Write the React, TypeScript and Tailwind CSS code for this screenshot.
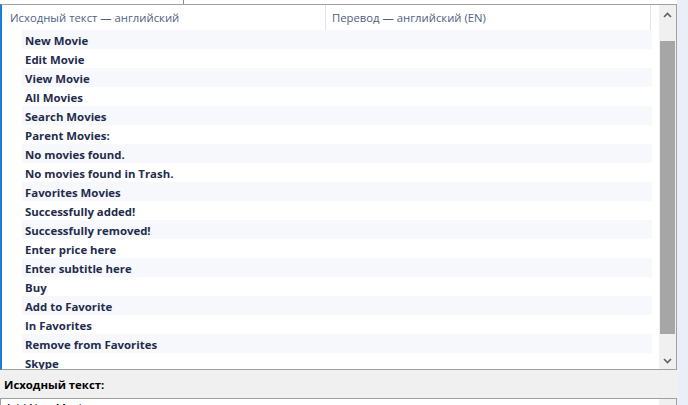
const ROWS = [
  "New Movie",
  "Edit Movie",
  "View Movie",
  "All Movies",
  "Search Movies",
  "Parent Movies:",
  "No movies found.",
  "No movies found in Trash.",
  "Favorites Movies",
  "Successfully added!",
  "Successfully removed!",
  "Enter price here",
  "Enter subtitle here",
  "Buy",
  "Add to Favorite",
  "In Favorites",
  "Remove from Favorites",
  "Skype",
];

function Chevron({ up }: { up?: boolean }) {
  return (
    <svg width="9" height="6" viewBox="0 0 9 6" className="text-[#606060]">
      <path
        d={up ? "M1 5 L4.5 1.5 L8 5" : "M1 1 L4.5 4.5 L8 1"}
        fill="none"
        stroke="currentColor"
        strokeWidth="1.6"
      />
    </svg>
  );
}

export default function App() {
  return (
    <div
      className="flex w-[688px] h-[405px] overflow-hidden bg-[#f0f0f0]"
      style={{ fontFamily: '"Open Sans", "Noto Sans", sans-serif' }}
    >
      <div className="flex flex-col w-[677px]">
        {/* strip from the panel above */}
        <div className="h-[4px] shrink-0 bg-white flex pl-[183px]">
          <div className="w-px h-full bg-[#8a8a8a]" />
        </div>

        {/* string list */}
        <div className="h-[366px] shrink-0 flex border-t border-r border-b border-t-[#a0a0a0] border-r-[#a0a0a0] border-b-[#a0a0a0] border-l-2 border-l-[#1a7fd9] bg-white">
          <div className="flex-1 flex flex-col overflow-hidden">
            <div className="h-[25px] flex shrink-0 text-[11.3px] text-[#51617f]">
              <div className="w-[324px] flex items-center pl-[8px] pt-[1px] border-r border-[#e3e3e3]">
                Исходный текст — английский
              </div>
              <div className="w-[325px] flex items-center pl-[6px] pt-[1px] border-r border-[#e3e3e3]">
                Перевод — английский (EN)
              </div>
            </div>
            <div className="flex flex-col">
              {ROWS.map((r, i) => (
                <div key={r} className="h-[19px] shrink-0 flex pl-[20px] pr-[7px]">
                  <div
                    className={`flex-1 flex items-center pl-[3px] pt-[2px] text-[11.4px] font-bold text-[#1f2c4c] ${
                      i % 2 === 0 ? "bg-[#f7f8fc]" : "bg-white"
                    }`}
                  >
                    {r}
                  </div>
                </div>
              ))}
            </div>
          </div>

          {/* scrollbar */}
          <div className="w-[17px] flex flex-col bg-[#f0f0f0]">
            <div className="h-[19px] flex items-center justify-center">
              <Chevron up />
            </div>
            <div className="flex-1 flex flex-col px-px pt-[17px] pb-[18px]">
              <div className="flex-1 bg-[#a6a6a6]" />
            </div>
            <div className="h-[17px] flex items-center justify-center">
              <Chevron />
            </div>
          </div>
        </div>

        {/* source text label */}
        <div className="h-[28px] shrink-0 flex items-center pl-[4px] pt-[1px] text-[11.4px] font-bold text-black">
          Исходный текст:
        </div>

        {/* source text box */}
        <div className="flex-1 shrink-0 flex border-t border-l border-r border-[#a0a0a0] bg-white">
          <div className="flex-1 pl-[4px] pt-[1px] text-[11.4px] leading-[16px] text-black">
            Add New Movie
          </div>
          <div className="w-[17px] bg-[#f0f0f0]" />
        </div>
      </div>
      <div className="flex-1 bg-[#eaeef6]" />
    </div>
  );
}
